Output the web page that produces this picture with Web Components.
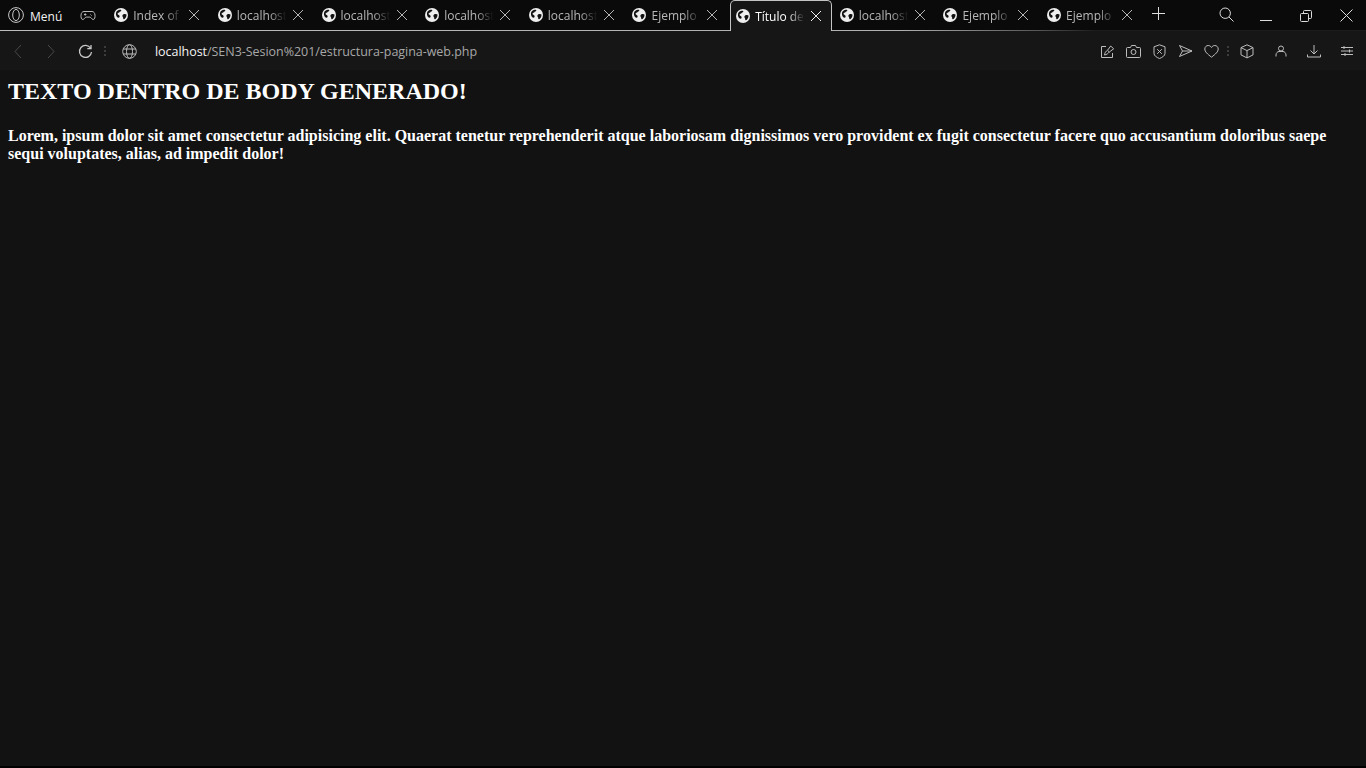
<!DOCTYPE html>
<html lang="es">
<head>
<meta charset="utf-8">
<title>Título de la página</title>
<style>
  html, body { margin: 0; height: 100%; background: #000; }
  body { display: flex; flex-direction: column; height: 768px; overflow: hidden; font-family: "Open Sans", sans-serif; }
</style>
</head>
<body>
<browser-frame>
  <tab-strip slot="tabs">
    <browser-tab>Index of /</browser-tab>
    <browser-tab>localhost/</browser-tab>
    <browser-tab>localhost/</browser-tab>
    <browser-tab>localhost/</browser-tab>
    <browser-tab>localhost/</browser-tab>
    <browser-tab>Ejemplo de</browser-tab>
    <browser-tab active>Título de</browser-tab>
    <browser-tab>localhost/</browser-tab>
    <browser-tab>Ejemplo fo</browser-tab>
    <browser-tab>Ejemplo fo</browser-tab>
  </tab-strip>
  <nav-bar slot="nav" host="localhost" path="/SEN3-Sesion%201/estructura-pagina-web.php"></nav-bar>
  <page-body>
    <h2 slot="title">TEXTO DENTRO DE BODY GENERADO!</h2>
    Lorem, ipsum dolor sit amet consectetur adipisicing elit. Quaerat tenetur reprehenderit atque laboriosam dignissimos vero provident ex fugit consectetur facere quo accusantium doloribus saepe sequi voluptates, alias, ad impedit dolor!
  </page-body>
</browser-frame>

<script>
 // stroke icons shared by the tab strip and the toolbar
 const ICONS = {
     opera: '<circle cx="8" cy="8" r="7.4"/><ellipse cx="8" cy="8" rx="3.3" ry="5.6"/>',
     game: '<path d="M4 3.5h8c1.9 0 2.8 1.6 3 3.6.2 2.2-.3 4.4-1.8 4.4-1.6 0-2-2.4-3.4-2.4H6.2c-1.400 0-1.800 2.400-3.400 2.400C1.300 11.500.800 9.300 1 7.100c.2-2 1.100-3.600 3-3.600z"/><path d="M4 6.500h2.400M5.200 5.300v2.400M10.400 6.400h.6M11.400 7.600h.6"/>',
     close: '<path d="M1 1l10 10M11 1L1 11"/>',
     plus: '<path d="M6.500 0v13M0 6.500h13"/>',
     search: '<circle cx="6.200" cy="6.200" r="5.200"/><path d="M10 10l4.500 4.500"/>',
     minimize: '<path d="M0 6.500h12"/>',
     restore: '<rect x=".5" y="3.500" width="8" height="8" rx="1"/><path d="M3.500 3.500V1.500a1 1 0 0 1 1-1h6a1 1 0 0 1 1 1v6a1 1 0 0 1-1 1h-2"/>',
     winclose: '<path d="M.5.5l12 12M12.500.5l-12 12"/>',
     back: '<path d="M7 1L1 7.500 7 14"/>',
     forward: '<path d="M1 1l6 6.500L1 14"/>',
     reload: '<path d="M12.600 4.200A6 6 0 1 0 13.500 8"/><path d="M13 1v3.700H9.300"/>',
     globe: '<circle cx="7.500" cy="7.500" r="6.800"/><ellipse cx="7.500" cy="7.500" rx="3" ry="6.800"/><path d="M1.300 5h12.400M1.300 10h12.400"/>',
     snap: '<path d="M6 2.500H1.500v11h11V9"/><path d="M4.500 11c.3-2.400 1.300-3.700 3-4.700l1.800 1.700c-1.200 1.600-2.600 2.600-4.800 3z"/><path d="M7.500 6.300l3.200-4.300 3 2.800-4.400 3.200"/>',
     camera: '<path d="M1.500 3.500h3l1-2h4l1 2h3a1 1 0 0 1 1 1v8a1 1 0 0 1-1 1h-12a1 1 0 0 1-1-1v-8a1 1 0 0 1 1-1z"/><circle cx="7.500" cy="8" r="2.500"/>',
     shield: '<path d="M6.500.8l5.500 2v6.500c0 2.500-2.500 4-5.500 5.200C3.500 13.300 1 11.800 1 9.300V2.800z"/><path d="M4.200 5.200l4.600 4.600M8.800 5.200L4.200 9.800"/>',
     send: '<path d="M1.500 1.500L14 7 1.500 12.500 4.500 7zM4.500 7H14"/>',
     heart: '<path d="M7.500 13.200C3.500 10 .8 7.900.8 5 .8 3 2.300 1.500 4.200 1.500c1.400 0 2.600.8 3.300 2 .7-1.200 1.900-2 3.300-2 1.900 0 3.400 1.500 3.400 3.500 0 2.900-2.700 5-6.700 8.200z"/>',
     cube: '<path d="M7 .8l6 2.800v7.300l-6 3-6-3V3.600z"/><path d="M1 3.600l6 3 6-3M7 6.600v7.300"/>',
     user: '<circle cx="6" cy="3.500" r="2.500"/><path d="M1 11.500V10c0-2 1.500-3.500 3-3.500h4c1.500 0 3 1.500 3 3.500v1.500"/>',
     download: '<path d="M7 0v8.500M3.500 5.500L7 9l3.500-3.500M.5 9.500v2.500h13V9.500"/>',
     settings: '<path d="M0 2.500h12M0 6h12M0 9.500h12M3 1v3M8.500 4.500v3M4 8v3"/>'
 };

 // builds an <svg> string, w/h are the viewBox size as well as the pixel size
 function icon(name, w, h, sw = 1) {
     return `<svg width="${w}" height="${h}" viewBox="0 0 ${w} ${h}" fill="none" stroke="currentColor" stroke-width="${sw}">${ICONS[name]}</svg>`;
 }

 customElements.define('browser-frame', class BrowserFrame extends HTMLElement {
     constructor() {
         super();
         this.attachShadow({ mode: 'open' });
         this.shadowRoot.innerHTML = `
          <style>
            :host { display: flex; flex-direction: column; flex: 1; min-height: 0; }
            main { display: flex; flex: 1; min-height: 0; margin-bottom: 2px; }
          </style>
          <slot name="tabs"></slot>
          <slot name="nav"></slot>
          <main><slot></slot></main>`;
     }
 });

 customElements.define('tab-strip', class TabStrip extends HTMLElement {
     constructor() {
         super();
         this.attachShadow({ mode: 'open' });
         this.shadowRoot.innerHTML = `
          <style>
            :host {
                display: flex; align-items: stretch; height: 31px; box-sizing: border-box;
                background: #0a0a0a; color: #fff; font-size: 12px;
                position: relative;
            }
            /* the line under the strip, it fades out after the last tab */
            .line {
                position: absolute; left: 0; right: 0; bottom: 0; height: 1px;
                background: linear-gradient(90deg, #bdbdbd 0, #b0b0b0 900px, #555 1040px, #1c1c1c 1095px);
            }
            .logo { display: flex; align-items: center; padding: 0 0 1px 8px; color: #c8c8c8; }
            .menu { padding-left: 6px; width: 34px; line-height: 31px; color: #f2f2f2; position: relative; top: .5px; }
            .game { display: flex; align-items: center; justify-content: center; width: 16px; margin-left: 16px; margin-right: 12.200px; color: #bbb; }
            .tabs { display: flex; gap: 1.670px; }
            .plus { display: flex; align-items: center; margin-left: 8.500px; padding-bottom: 5px; color: #ddd; }
            .win { display: flex; align-items: center; color: #ddd; margin-left: auto; }
            .win span { display: flex; align-items: center; justify-content: center; width: 40px; height: 30px; }
            .search svg { margin-top: -2px; }
            .min svg { margin-top: 10px; }
          </style>
          <div class="line"></div>
          <span class="logo">${icon('opera', 16, 16)}</span>
          <span class="menu">Menú</span>
          <span class="game">${icon('game', 16, 15)}</span>
          <div class="tabs"><slot></slot></div>
          <span class="plus">${icon('plus', 13, 13)}</span>
          <div class="win">
            <span class="search">${icon('search', 15, 15)}</span>
            <span class="min">${icon('minimize', 12, 13)}</span>
            <span>${icon('restore', 12, 12)}</span>
            <span>${icon('winclose', 13, 13)}</span>
          </div>`;
     }
 });

 customElements.define('browser-tab', class BrowserTab extends HTMLElement {
     constructor() {
         super();
         this.attachShadow({ mode: 'open' });
         this.shadowRoot.innerHTML = `
          <style>
            :host {
                display: flex; align-items: center; width: 102px; height: 31px; box-sizing: border-box;
                padding: 0 0 1px 6px; position: relative; color: #b8b8b8;
            }
            :host([active]) {
                background: #161616; color: #fff; z-index: 1; height: 31px;
                border: 1px solid #c4c4c4; border-bottom: 0; border-radius: 5px 5px 0 0;
                padding-left: 5px;
            }
            svg.fav { flex: none; color: #eee; }
            .text {
                flex: none; width: 52px; margin-left: 5px; white-space: nowrap; overflow: hidden; line-height: 30px;
                position: relative; top: 1px;
                -webkit-mask-image: linear-gradient(90deg, #000 62%, transparent 95%);
                mask-image: linear-gradient(90deg, #000 62%, transparent 95%);
            }
            .close { display: flex; margin-left: 3px; color: #b4b4b4; }
            :host([active]) .close { color: #eee; }
          </style>
          <svg class="fav" width="14" height="14" viewBox="0 0 14 14">
            <circle cx="7" cy="7" r="7" fill="currentColor"/>
            <path fill="#111" d="M3 3.100c1.200-1 3-1.500 4.200-1.200.5.700-.5 1.400-1.200 1.700-.3.900-1.300 1.400-2.100 1.500-.7 1-.2 1.700.7 1.800.8.100 1.200 1 1 1.900-.2.700-.8 1-1.300 1C3 9.500 1.500 7 2 4.900c.2-.6.600-1.300 1-1.800zM9.500 6.200c1-.6 2.600-.3 3 .4.100 1.500-.6 3.400-1.900 4.500-.9.500-1.500-.3-1.400-1.200.1-.8-.9-1.200-.8-2.200 0-.7.500-1.100 1.100-1.500z"/>
          </svg>
          <span class="text"><slot></slot></span>
          <span class="close">${icon('close', 12, 12)}</span>`;
     }
 });

 customElements.define('nav-bar', class NavBar extends HTMLElement {
     constructor() {
         super();
         this.attachShadow({ mode: 'open' });
         this.shadowRoot.innerHTML = `
          <style>
            :host {
                display: flex; align-items: center; height: 39px; box-sizing: border-box;
                background: #161616; color: #bdbdbd; padding-top: 1px;
            }
            span { display: flex; align-items: center; justify-content: center; }
            .back { width: 8px; margin-left: 14px; color: #4a4a4a; }
            .fwd { width: 8px; margin-left: 25px; color: #4a4a4a; }
            .reload { margin-left: 23px; color: #c8c8c8; }
            .sep { width: 2px; height: 11px; margin-left: 11px; background: repeating-linear-gradient(180deg, #3c3c3c 0 2px, transparent 2px 4px); }
            .sep.r { margin: 0 10px 0 3px; }
            .globe { margin-left: 16px; color: #bbb; }
            .url { margin-left: 18px; font-size: 12.500px; letter-spacing: -.04px; color: #a8a8a8; white-space: nowrap; display: block; }
            .url b { font-weight: 400; color: #f4f4f4; }
            .tools { margin-left: auto; display: flex; align-items: center; }
            .tools span { width: 26px; }
            .tools .wide { width: 33px; }
            .tools .sep { width: 2px; }
          </style>
          <span class="back">${icon('back', 8, 15)}</span>
          <span class="fwd">${icon('forward', 8, 15)}</span>
          <span class="reload">${icon('reload', 15, 15, 1.300)}</span>
          <span class="sep"></span>
          <span class="globe">${icon('globe', 15, 15)}</span>
          <span class="url"><b>${this.getAttribute('host')}</b>${this.getAttribute('path')}</span>
          <div class="tools">
            <span>${icon('snap', 15, 15)}</span>
            <span>${icon('camera', 15, 15)}</span>
            <span>${icon('shield', 13, 15)}</span>
            <span>${icon('send', 15, 14)}</span>
            <span>${icon('heart', 15, 15)}</span>
            <span class="sep r"></span>
            <span style="width:16px">${icon('cube', 14, 15)}</span>
            <span class="wide" style="margin-left:9px">${icon('user', 12, 12)}</span>
            <span class="wide">${icon('download', 14, 13)}</span>
            <span class="wide" style="margin-right:3px">${icon('settings', 12, 12)}</span>
          </div>`;
     }
 });

 customElements.define('page-body', class PageBody extends HTMLElement {
     constructor() {
         super();
         this.attachShadow({ mode: 'open' });
         this.shadowRoot.innerHTML = `
          <style>
            :host {
                display: block; flex: 1; background: #121212; color: #fff;
                font-family: "Liberation Serif", serif; font-weight: 700; font-size: 16px;
                padding: 7px 8px 0; box-sizing: border-box;
            }
            ::slotted(h2) { margin: 0 0 22px; font-size: 24px; line-height: 28px; font-weight: 700; }
            p { margin: 0; line-height: 18px; }
          </style>
          <slot name="title"></slot>
          <p><slot></slot></p>`;
     }
 });
</script>
</body>
</html>
